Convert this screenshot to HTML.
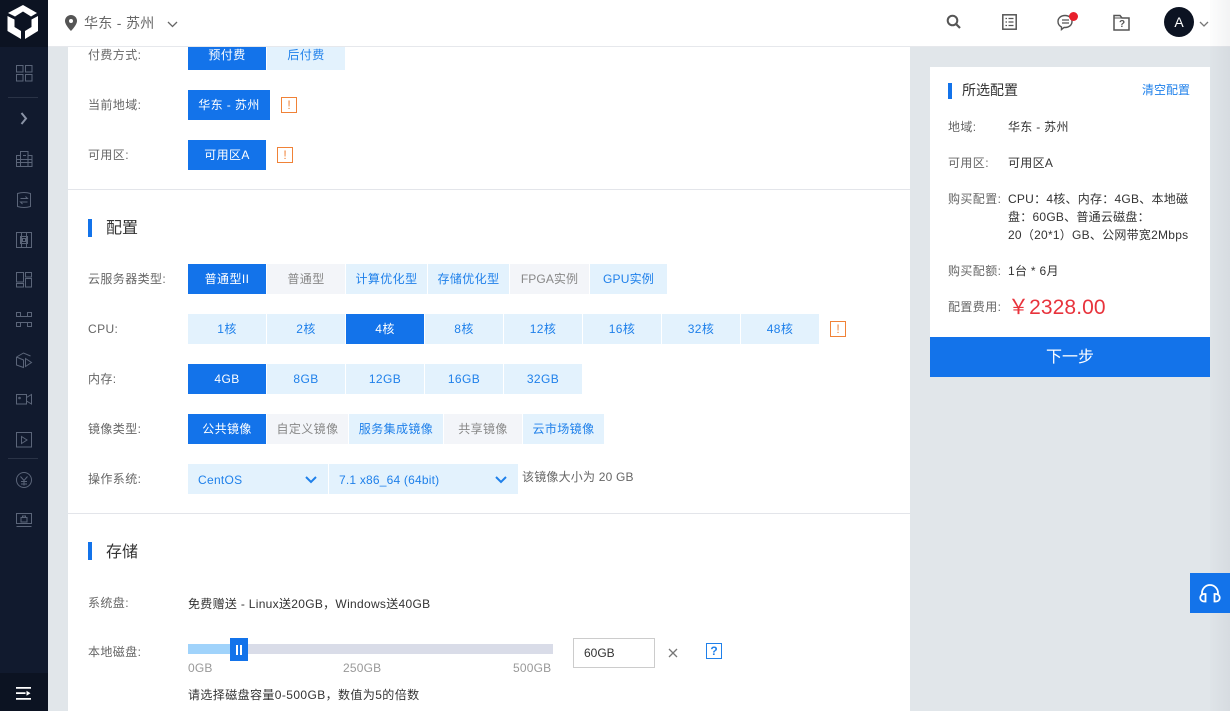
<!DOCTYPE html>
<html><head><meta charset="utf-8"><style>
*{box-sizing:border-box}
html,body{margin:0;padding:0;width:1230px;height:711px;overflow:hidden;background:#e1e6ea;font-family:"Liberation Sans","Noto Sans CJK SC",sans-serif;font-size:12px;letter-spacing:.4px;color:#333}
.a,.b,.l,.t{position:absolute}
.b{height:30px;line-height:30px;text-align:center;white-space:nowrap}
.on{background:#1373ea;color:#fff}
.off{background:#e3f2fd;color:#1f80ea}
.dis{background:#f3f5f9;color:#888}
.l{left:88px;color:#666;white-space:nowrap;line-height:20px}
.t{white-space:nowrap;line-height:20px}
.p{letter-spacing:.3px}
.bar{position:absolute;width:4px;height:18px;background:#1373ea}
.ex{position:absolute;width:16px;height:16px;border:1px solid #f08237;color:#f08237;text-align:center;line-height:14px;font-size:12px;letter-spacing:0}
svg{position:absolute;overflow:visible}
.ic{fill:none;stroke:#5b6579;stroke-width:1}
</style></head><body>

<div class="a" style="left:68px;top:0;width:842px;height:711px;background:#fff"></div>
<div class="a" style="left:68px;top:189px;width:842px;height:1px;background:#e3e5ea"></div>
<div class="a" style="left:68px;top:513px;width:842px;height:1px;background:#e3e5ea"></div>

<div class="l" style="top:45px">付费方式:</div>
<div class="b on" style="left:188px;top:40px;width:78px">预付费</div>
<div class="b off" style="left:267px;top:40px;width:78px">后付费</div>
<div class="l" style="top:95px">当前地域:</div>
<div class="b on" style="left:188px;top:90px;width:82px">华东 - 苏州</div>
<div class="ex" style="left:281px;top:97px">!</div>
<div class="l" style="top:145px">可用区:</div>
<div class="b on" style="left:188px;top:140px;width:78px">可用区A</div>
<div class="ex" style="left:277px;top:147px">!</div>

<div class="bar" style="left:88px;top:219px"></div>
<div class="t" style="left:106px;top:218px;font-size:16px;letter-spacing:0;line-height:22px">配置</div>

<div class="l" style="top:269px">云服务器类型:</div>
<div class="b on" style="left:188px;top:264px;width:78px">普通型II</div>
<div class="b dis" style="left:267px;top:264px;width:78px">普通型</div>
<div class="b off" style="left:346px;top:264px;width:81px">计算优化型</div>
<div class="b off" style="left:428px;top:264px;width:81px">存储优化型</div>
<div class="b dis" style="left:510px;top:264px;width:79px;letter-spacing:.1px">FPGA实例</div>
<div class="b off" style="left:590px;top:264px;width:77px;letter-spacing:.2px">GPU实例</div>

<div class="l" style="top:319px">CPU:</div>
<div class="b off" style="left:188px;top:314px;width:78px">1核</div>
<div class="b off" style="left:267px;top:314px;width:78px">2核</div>
<div class="b on" style="left:346px;top:314px;width:78px">4核</div>
<div class="b off" style="left:425px;top:314px;width:78px">8核</div>
<div class="b off" style="left:504px;top:314px;width:78px">12核</div>
<div class="b off" style="left:583px;top:314px;width:78px">16核</div>
<div class="b off" style="left:662px;top:314px;width:78px">32核</div>
<div class="b off" style="left:741px;top:314px;width:78px">48核</div>
<div class="ex" style="left:830px;top:321px">!</div>

<div class="l" style="top:369px">内存:</div>
<div class="b on" style="left:188px;top:364px;width:78px">4GB</div>
<div class="b off" style="left:267px;top:364px;width:78px">8GB</div>
<div class="b off" style="left:346px;top:364px;width:78px">12GB</div>
<div class="b off" style="left:425px;top:364px;width:78px">16GB</div>
<div class="b off" style="left:504px;top:364px;width:78px">32GB</div>

<div class="l" style="top:419px">镜像类型:</div>
<div class="b on" style="left:188px;top:414px;width:78px">公共镜像</div>
<div class="b dis" style="left:267px;top:414px;width:81px">自定义镜像</div>
<div class="b off" style="left:349px;top:414px;width:94px">服务集成镜像</div>
<div class="b dis" style="left:444px;top:414px;width:78px">共享镜像</div>
<div class="b off" style="left:523px;top:414px;width:81px">云市场镜像</div>

<div class="l" style="top:469px">操作系统:</div>
<div class="b off" style="left:188px;top:464px;width:140px;text-align:left;padding-left:10px;line-height:32px;letter-spacing:.3px">CentOS</div>
<svg style="left:305px;top:476px" width="12" height="8" viewBox="0 0 12 8"><path d="M1 1l5 5 5-5" fill="none" stroke="#1f80ea" stroke-width="2"/></svg>
<div class="b off" style="left:329px;top:464px;width:189px;text-align:left;padding-left:10px;line-height:32px;letter-spacing:.2px">7.1 x86_64 (64bit)</div>
<svg style="left:495px;top:476px" width="12" height="8" viewBox="0 0 12 8"><path d="M1 1l5 5 5-5" fill="none" stroke="#1f80ea" stroke-width="2"/></svg>
<div class="t" style="left:522px;top:467px;color:#666;letter-spacing:.2px">该镜像大小为 20 GB</div>

<div class="bar" style="left:88px;top:542px"></div>
<div class="t" style="left:106px;top:542px;font-size:16px;letter-spacing:0;line-height:22px">存储</div>

<div class="l" style="top:593px">系统盘:</div>
<div class="t p" style="left:188px;top:594px">免费赠送 - Linux送20GB，Windows送40GB</div>
<div class="l" style="top:642px">本地磁盘:</div>

<div class="a" style="left:188px;top:644px;width:365px;height:10px;background:#d9dce8"></div>
<div class="a" style="left:188px;top:644px;width:45px;height:10px;background:#a0d3fb"></div>
<div class="a" style="left:230px;top:638px;width:18px;height:23px;background:#1373ea"></div>
<div class="a" style="left:236px;top:645px;width:2px;height:10px;background:#fff"></div>
<div class="a" style="left:240px;top:645px;width:2px;height:10px;background:#fff"></div>
<div class="t" style="left:188px;top:658px;color:#999;letter-spacing:.2px">0GB</div>
<div class="t" style="left:343px;top:658px;color:#999;letter-spacing:.2px">250GB</div>
<div class="t" style="left:513px;top:658px;color:#999;letter-spacing:.2px">500GB</div>
<div class="a" style="left:573px;top:638px;width:82px;height:30px;border:1px solid #ccc;line-height:28px;padding-left:10px;letter-spacing:0">60GB</div>
<svg style="left:668px;top:648px" width="10" height="10" viewBox="0 0 10 10"><path d="M1 1l8 8M9 1l-8 8" stroke="#777" stroke-width="1.300"/></svg>
<div class="a" style="left:706px;top:643px;width:16px;height:16px;border:1px solid #1f80ea;color:#1f80ea;text-align:center;line-height:14px;font-weight:bold;letter-spacing:0">?</div>
<div class="t" style="left:188px;top:685px">请选择磁盘容量0-500GB，数值为5的倍数</div>

<!-- right panel -->
<div class="a" style="left:930px;top:67px;width:280px;height:310px;background:#fff"></div>
<div class="bar" style="left:948px;top:83px;height:16px"></div>
<div class="t" style="left:962px;top:80px;font-size:14px;letter-spacing:0">所选配置</div>
<div class="t" style="left:1142px;top:80px;color:#1f80ea;letter-spacing:0">清空配置</div>
<div class="t" style="left:948px;top:117px;color:#666">地域:</div>
<div class="t p" style="left:1008px;top:117px">华东 - 苏州</div>
<div class="t" style="left:948px;top:153px;color:#666">可用区:</div>
<div class="t p" style="left:1008px;top:153px">可用区A</div>
<div class="t" style="left:948px;top:189px;color:#666">购买配置:</div>
<div class="t p" style="left:1008px;top:190px;line-height:18px;letter-spacing:.25px">CPU：4核、内存：4GB、本地磁<br>盘：60GB、普通云磁盘：<br>20（20*1）GB、公网带宽2Mbps</div>
<div class="t" style="left:948px;top:261px;color:#666">购买配额:</div>
<div class="t p" style="left:1008px;top:261px">1台 * 6月</div>
<div class="t" style="left:948px;top:297px;color:#666">配置费用:</div>
<div class="t" style="left:1008px;top:296px;color:#e8333c;font-size:21px;line-height:24px;letter-spacing:.1px">￥2328.00</div>
<div class="a" style="left:930px;top:337px;width:280px;height:40px;background:#1373ea;color:#fff;text-align:center;line-height:42px;font-size:16px;letter-spacing:0">下一步</div>

<!-- sidebar -->
<div class="a" style="left:0;top:0;width:48px;height:711px;background:#111a2e"></div>
<div class="a" style="left:0;top:0;width:48px;height:47px;background:#0c1322"></div>
<div class="a" style="left:0;top:673px;width:48px;height:38px;background:#0c1322"></div>
<svg style="left:0;top:0" width="48" height="47" viewBox="0 0 48 47"><path d="M23 5L37 13 31 16.500 23 11.500 15 16.500 8 13z" fill="#fff"/><path d="M7.500 16L14.500 19.500V27L21 31V39L7.500 31z" fill="#fff"/><path d="M38 16L31.500 19.500V27L25 31V39L38 31z" fill="#fff"/></svg>
<div class="a" style="left:8px;top:97px;width:30px;height:1px;background:#2a3346"></div>
<div class="a" style="left:8px;top:458px;width:30px;height:1px;background:#2a3346"></div>
<svg style="left:0;top:0" width="48" height="711" viewBox="0 0 48 711">
<g class="ic">
<path d="M16.500 65.500h6.500v6.500h-6.500zM25.500 65.500h6.500v6.500h-6.500zM16.500 74.500h6.500v6.500h-6.500zM25.500 74.500h6.500v6.500h-6.500z"/>
<path d="M21.500 113l4.500 5.500-4.500 5.500" stroke="#8a93a6" stroke-width="2"/>
<path d="M16.500 155.500h4v11h-4zM20.500 151.500h7.500v15h-7.500zM28 155.500h4v11h-4zM16.500 159.500h15.500M16.500 162.500h15.500M23 155.500h3"/>
<path d="M17.500 193.500q6.500-2 13 0v13q-6.500 2-13 0zM20.500 198.500h7l-2-2M27.500 202h-7l2 2"/>
<path d="M16.500 232.500h5v15h-5zM26.500 232.500h5v15h-5zM20.500 236.500h7v7h-7zM21.500 232.500h5M21.500 247.500h5M22.500 238.500h3v3h-3z"/>
<path d="M16.500 272.500h7v9.500h-7zM25.500 272.500h6v4.500h-6zM25.500 278.500h6v8.500h-6zM16.500 283.500h7v3.500h-7z"/>
<path d="M16.500 312.500h4v4h-4zM27.500 312.500h4v4h-4zM16.500 322.500h4v4h-4zM27.500 322.500h4v4h-4zM20.500 316.500h7M20.500 322.500h7"/>
<path d="M16.500 357l7-4 7 3M16.500 357v8l7 2.500v-7.500l-7-3M25.500 358.500v8l6-4z"/>
<path d="M16.500 394.500h10v9.500h-10zM26.500 397.500l5-3v9.500l-5-3z"/><circle cx="19.500" cy="398" r=".8"/>
<path d="M16.500 432.500h15v14.500h-15zM21.500 436.500l5.500 3.500-5.500 3.500z"/>
<circle cx="24" cy="480" r="7.500"/><path d="M20.500 476.500l3.500 4 3.500-4M24 480.500v5M21 481.500h6M21 484h6"/>
<path d="M16.500 513.500h15v10h-15zM16.500 526.500h15M21 517.500h6v4.500h-6zM22.500 517.500v-1.500h3v1.500"/>
</g>
<path d="M16 687h15v1.700H16zM16 692.300h9.500v1.700H16zM16 698h15v1.700H16z" fill="#fff"/><path d="M26.500 690.700l4 2.500-4 2.500z" fill="#fff"/>
</svg>

<!-- header -->
<div class="a" style="left:48px;top:0;width:1182px;height:47px;background:#fff;border-bottom:1px solid #e6e8ec"></div>
<svg style="left:65px;top:15px" width="12" height="16" viewBox="0 0 12 16"><path d="M6 0a6 6 0 0 0-6 6c0 4 6 10 6 10s6-6 6-10a6 6 0 0 0-6-6zm0 8a2 2 0 1 1 0-4 2 2 0 0 1 0 4z" fill="#555"/></svg>
<div class="t" style="left:84px;top:13px;font-size:14px;color:#666;letter-spacing:.3px">华东 - 苏州</div>
<svg style="left:167px;top:21px" width="11" height="7" viewBox="0 0 11 7"><path d="M1 1l4.500 4.500L10 1" fill="none" stroke="#666" stroke-width="1.300"/></svg>
<svg style="left:946px;top:14px" width="15" height="15" viewBox="0 0 15 15"><circle cx="6.500" cy="6.500" r="4.800" fill="none" stroke="#555" stroke-width="2"/><path d="M10 10l4 4" stroke="#555" stroke-width="2.200"/></svg>
<svg style="left:1002px;top:14px" width="15" height="16" viewBox="0 0 15 16"><rect x=".8" y=".8" width="13.400" height="14.400" fill="none" stroke="#555" stroke-width="1.500"/><path d="M3.500 4.500h1.500M6.500 4.500h5M3.500 8h1.500M6.500 8h5M3.500 11.500h1.500M6.500 11.500h5" stroke="#555" stroke-width="1.300"/></svg>
<svg style="left:1057px;top:14px" width="17" height="17" viewBox="0 0 17 17"><path d="M8 1.500c4 0 7 2.500 7 6s-3 6-7 6H7l-2.500 2v-2.500C2.500 12 1 10 1 7.500c0-3.500 3-6 7-6z" fill="none" stroke="#555" stroke-width="1.400"/><path d="M5 6h7M5 9h7" stroke="#555" stroke-width="1.300"/></svg>
<div class="a" style="left:1069px;top:12px;width:9px;height:9px;border-radius:50%;background:#e8202c"></div>
<svg style="left:1113px;top:14px" width="17" height="17" viewBox="0 0 17 17"><path d="M1 16V1.500h6L9 4h7v12z" fill="none" stroke="#555" stroke-width="1.500"/><path d="M1 4h8" stroke="#555" stroke-width="1"/></svg>
<div class="a" style="left:1118px;top:19px;width:8px;font-size:10px;line-height:11px;font-weight:bold;color:#555;letter-spacing:0;text-align:center">?</div>
<div class="a" style="left:1164px;top:7px;width:30px;height:30px;border-radius:50%;background:#0c1322;color:#fff;text-align:center;line-height:30px;font-size:14px;letter-spacing:0">A</div>
<svg style="left:1199px;top:21px" width="10" height="6" viewBox="0 0 10 6"><path d="M1 1l4 4 4-4" fill="none" stroke="#777" stroke-width="1.300"/></svg>
<div class="a" style="left:48px;top:47px;width:20px;height:664px;background:#e1e6ea"></div>
<div class="a" style="left:910px;top:47px;width:20px;height:664px;background:#e1e6ea"></div>
<div class="a" style="left:1210px;top:0;width:20px;height:711px;background:linear-gradient(to right,rgba(20,30,50,.01),rgba(20,30,50,.05))"></div>

<div class="a" style="left:1190px;top:573px;width:40px;height:40px;background:#1373ea"></div>
<svg style="left:1197px;top:583px" width="26" height="20" viewBox="0 0 26 20"><path d="M5 11V10a8 8 0 0 1 16 0v1" fill="none" stroke="#fff" stroke-width="1.800"/><path d="M8.500 11v7.500h-1.500a3.750 3.750 0 0 1 0-7.500zM17.500 11v7.500h1.500a3.750 3.750 0 0 0 0-7.500z" fill="none" stroke="#fff" stroke-width="1.800"/></svg>
</body></html>
